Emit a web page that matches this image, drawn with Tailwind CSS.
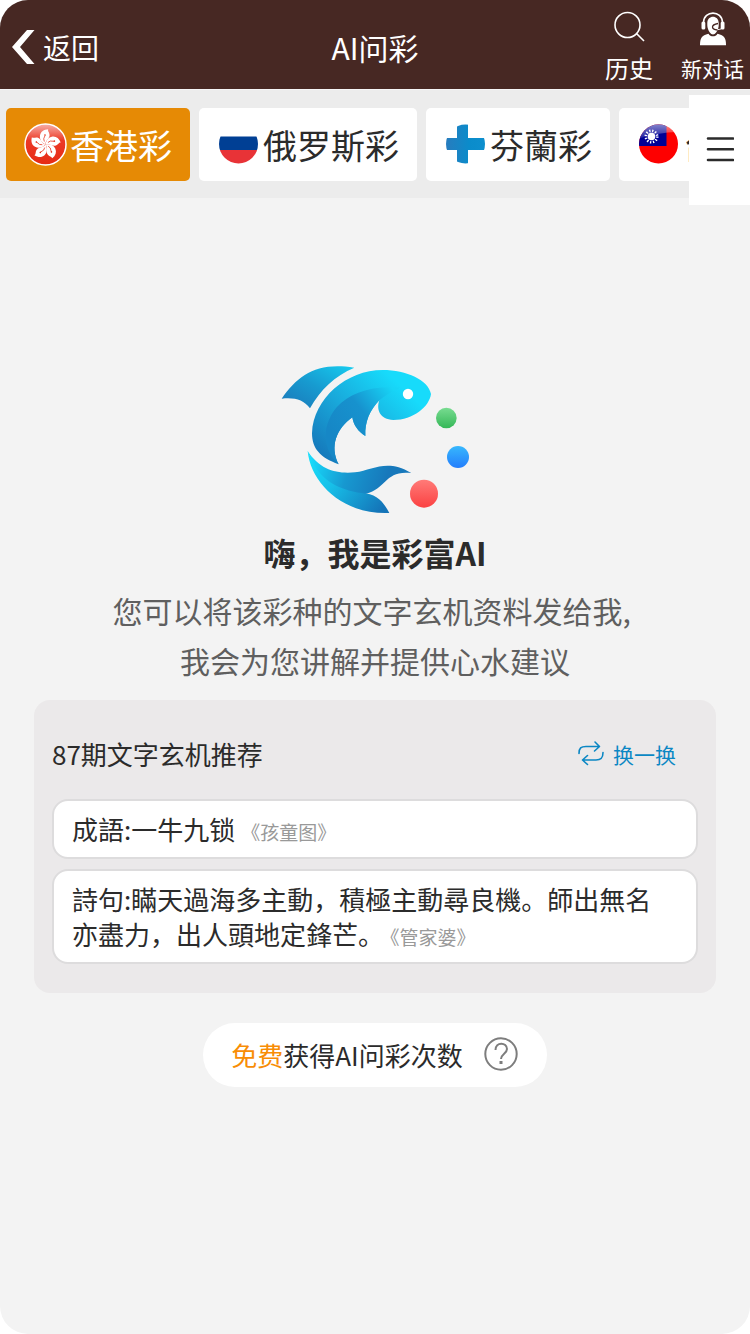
<!DOCTYPE html>
<html lang="zh-CN">
<head>
    <meta charset="UTF-8">
    <meta name="viewport" content="width=device-width, initial-scale=1.0">
    <title>AI问彩</title>
    <script src="https://cdn.jsdelivr.net/npm/@tailwindcss/browser@4"></script>
</head>
<body class="bg-white font-['Noto_Sans_CJK_SC',sans-serif] text-[#2b2b2b]">
    <div class="min-h-screen overflow-hidden rounded-[28px] bg-[#f3f3f3]">
        <!-- Header -->
        <header class="grid grid-cols-[1fr_auto_1fr] items-center h-[89px] bg-[#472823] text-white">
            <a href="#" class="flex items-center gap-2 pl-3 pt-1 text-[28px] leading-10">
                <svg class="w-[23px] h-[34px]" viewBox="0 0 23 34" fill="currentColor">
                    <path d="M15 0h7.500L8 17l14.500 17H15L0 17Z"/>
                </svg>
                返回
            </a>
            <h1 class="pt-1 text-[30px] leading-10">AI问彩</h1>
            <div class="flex justify-end gap-7 pr-[6px]">
                <button type="button" class="flex flex-col items-center pt-[5px] text-2xl">
                    <svg class="w-9 h-[42px]" viewBox="0 0 36 42" fill="none" stroke="currentColor" stroke-width="1.600">
                        <circle cx="16.500" cy="17" r="12.500"/>
                        <path d="m25.500 25.500 7.500 7.500"/>
                    </svg>
                    <span class="leading-9">历史</span>
                </button>
                <button type="button" class="flex flex-col items-center pt-[5px] text-[21px]">
                    <svg class="w-9 h-[42px]" viewBox="0 0 36 42" fill="currentColor">
                        <path d="M8.500 14.500C9 2 27 2 27.500 14.500" fill="none" stroke="currentColor" stroke-width="1.600"/>
                        <rect x="6.500" y="13.500" width="3.800" height="8" rx="1.600"/>
                        <rect x="25.700" y="13.500" width="3.800" height="8" rx="1.600"/>
                        <path d="M12.300 15c0-8.500 11.400-8.500 11.400 0 0 1 .2 3-.4 5-1 3.500-3 6.500-5.300 6.500s-4.300-3-5.300-6.500c-.5-2-.4-4-.4-5Z"/>
                        <path d="M28 20q-2 1.800-9 1.800" fill="none" stroke="currentColor" stroke-width="1"/>
                        <path d="M23 15.500q-5.500 1-5.500 3.500t5 3" fill="none" stroke="#472823" stroke-width="1.300"/>
                        <path d="M5 37.200c0-7 1.500-10 8.500-11.500 2 3.500 7 3.500 9 0 7 1.500 8.500 4.500 8.500 11.500Z"/>
                    </svg>
                    <span class="leading-9">新对话</span>
                </button>
            </div>
        </header>

        <!-- Lottery tabs -->
        <div class="relative">
            <nav class="flex gap-[9px] h-[109px] overflow-hidden border-t border-[#f6f6f6] bg-[#ececec] pl-[6px] pt-[18px] text-[34px] leading-none whitespace-nowrap">
                <button type="button" class="flex shrink-0 items-center gap-[3px] h-[73px] rounded-[5px] bg-[#e68a05] px-[18px] text-white">
                    <svg class="size-[43px]" viewBox="0 0 43 43">
                        <defs>
                            <linearGradient id="hkShine" x1="0" y1="0" x2="0" y2="1">
                                <stop offset="0" stop-color="#f7b0a8"/>
                                <stop offset=".4" stop-color="#ec3a26"/>
                                <stop offset="1" stop-color="#e62a14"/>
                            </linearGradient>
                            <g id="petal">
                                <path d="M0 0C-3.500-2-6-5-5-9.500-4-13-1-15 3.500-15 2.500-13 5-11.500 4.500-8.500 4-5.500 0-4 0 0Z" fill="#fff"/>
                                <path d="M-1-3Q-2.500-5.500 0-9" fill="none" stroke="#e62a14" stroke-width=".7"/>
                                <circle cx="0" cy="-9.500" r=".8" fill="#e62a14"/>
                            </g>
                        </defs>
                        <circle cx="21.500" cy="21.500" r="20.500" fill="url(#hkShine)" stroke="#fff" stroke-width="1.500"/>
                        <g transform="translate(21.500 21.500) rotate(-3)">
                            <use href="#petal"/>
                            <use href="#petal" transform="rotate(72)"/>
                            <use href="#petal" transform="rotate(144)"/>
                            <use href="#petal" transform="rotate(216)"/>
                            <use href="#petal" transform="rotate(288)"/>
                        </g>
                    </svg>
                    香港彩
                </button>
                <button type="button" class="flex shrink-0 items-center gap-[3px] h-[73px] rounded-[5px] bg-white px-[18px]">
                    <svg class="size-[43px]" viewBox="0 0 43 43">
                        <clipPath id="round"><circle cx="21.500" cy="21" r="19.500"/></clipPath>
                        <g clip-path="url(#round)">
                            <path d="M0 13.500h43V27H0z" fill="#003f94"/>
                            <path d="M0 27h43v16H0z" fill="#e83337"/>
                        </g>
                    </svg>
                    俄罗斯彩
                </button>
                <button type="button" class="flex shrink-0 items-center gap-[3px] h-[73px] rounded-[5px] bg-white px-[18px]">
                    <svg class="size-[43px]" viewBox="0 0 43 43">
                        <linearGradient id="cross" x1="0" y1="0" x2="1" y2="0">
                            <stop offset="0" stop-color="#2a7bbd"/>
                            <stop offset=".6" stop-color="#0a8ccb"/>
                            <stop offset="1" stop-color="#0d8fce"/>
                        </linearGradient>
                        <path clip-path="url(#round)" d="M13 0h11v15h19v12H24v16H13V27H0V15h13z" fill="url(#cross)"/>
                    </svg>
                    芬蘭彩
                </button>
                <button type="button" class="flex shrink-0 items-center gap-[3px] h-[73px] rounded-[5px] bg-white px-[18px]">
                    <svg class="size-[43px]" viewBox="0 0 43 43">
                        <linearGradient id="gloss" x1="0" y1="0" x2="0" y2="1">
                            <stop offset="0" stop-color="#fff" stop-opacity=".55"/>
                            <stop offset="1" stop-color="#fff" stop-opacity=".1"/>
                        </linearGradient>
                        <g clip-path="url(#round)">
                            <path d="M0 0h43v43H0z" fill="#fe0000"/>
                            <path d="M0 0h29.500v23H0z" fill="#000095"/>
                            <path d="M0 0h43v9q-17-1-43 7z" fill="url(#gloss)"/>
                            <circle cx="14.500" cy="13.500" r="3.800" fill="#fff"/>
                            <circle cx="14.500" cy="13.500" r="5.700" fill="none" stroke="#fff" stroke-width="2.600" stroke-dasharray="1.300 1.680"/>
                        </g>
                    </svg>
                    台灣彩
                </button>
            </nav>
            <button type="button" aria-label="菜单" class="absolute right-0 top-[6px] flex h-[110px] w-[61px] items-center justify-center bg-white">
                <svg class="w-7 h-[26px]" viewBox="0 0 28 26" stroke="#2b2b2b" stroke-width="2.600" stroke-linecap="round">
                    <path d="M2 1.500h25M2 12.200h25M2 23h25"/>
                </svg>
            </button>
        </div>

        <!-- Welcome -->
        <main class="flex flex-col items-center px-[34px] pt-[157px]">
            <svg class="w-[210px] h-[170px]" viewBox="0 0 630 510">
                <defs>
                    <linearGradient id="fin" x1="0" y1="1" x2="1" y2="0">
                        <stop offset="0" stop-color="#1b76b8"/>
                        <stop offset=".5" stop-color="#179bd0"/>
                        <stop offset="1" stop-color="#17cdf0"/>
                    </linearGradient>
                    <linearGradient id="body" x1="150" y1="320" x2="380" y2="80" gradientUnits="userSpaceOnUse">
                        <stop offset="0" stop-color="#1574b8"/>
                        <stop offset=".5" stop-color="#19a8da"/>
                        <stop offset="1" stop-color="#17dbfb"/>
                    </linearGradient>
                    <linearGradient id="belly" x1="200" y1="250" x2="375" y2="110" gradientUnits="userSpaceOnUse">
                        <stop offset="0" stop-color="#1687c6"/>
                        <stop offset=".5" stop-color="#1792ce"/>
                        <stop offset="1" stop-color="#17d5f6"/>
                    </linearGradient>
                    <linearGradient id="tail" x1="120" y1="330" x2="340" y2="400" gradientUnits="userSpaceOnUse">
                        <stop offset="0" stop-color="#17d8fa"/>
                        <stop offset=".5" stop-color="#1798d0"/>
                        <stop offset="1" stop-color="#1778bb"/>
                    </linearGradient>
                    <linearGradient id="tailLow" x1="120" y1="300" x2="330" y2="470" gradientUnits="userSpaceOnUse">
                        <stop offset="0" stop-color="#17dffb"/>
                        <stop offset=".4" stop-color="#17bfe8"/>
                        <stop offset="1" stop-color="#1474b8"/>
                    </linearGradient>
                    <linearGradient id="green" x1="0" y1="0" x2="0" y2="1">
                        <stop offset="0" stop-color="#78dc91"/>
                        <stop offset="1" stop-color="#35b757"/>
                    </linearGradient>
                    <linearGradient id="blue" x1="0" y1="0" x2="0" y2="1">
                        <stop offset="0" stop-color="#37b8fd"/>
                        <stop offset="1" stop-color="#237dfc"/>
                    </linearGradient>
                    <linearGradient id="red" x1="0" y1="0" x2="0" y2="1">
                        <stop offset="0" stop-color="#ff7b78"/>
                        <stop offset="1" stop-color="#fb4142"/>
                    </linearGradient>
                </defs>
                <path d="M35 131C85 60 140 20 253 38C195 62 150 105 120 160C100 134 75 127 35 131Z" fill="url(#fin)"/>
                <path d="M206 328C150 308 126 280 126 235C130 130 230 45 338 45C410 45 475 75 483 117C478 155 430 195 370 195C330 193 318 165 328 136C300 165 284 200 286 243C265 230 250 210 247 187C200 220 178 275 206 328Z" fill="url(#body)"/>
                <path d="M206 328C150 275 160 205 200 157C240 112 310 90 390 98C370 108 345 120 328 136C300 165 284 200 286 243C265 230 250 210 247 187C200 220 178 275 206 328Z" fill="url(#belly)"/>
                <circle cx="414" cy="117" r="15.500" fill="#fff"/>
                <path d="M113 288C122 385 220 480 358 474C343 445 325 422 288 415C240 400 150 380 113 288Z" fill="url(#tailLow)"/>
                <path d="M113 288C150 345 200 357 255 352C310 345 350 310 424 354C345 345 350 400 288 416C220 408 145 385 113 288Z" fill="url(#tail)"/>
                <circle cx="529" cy="189" r="31" fill="url(#green)"/>
                <circle cx="564" cy="306" r="33" fill="url(#blue)"/>
                <circle cx="462" cy="416" r="42" fill="url(#red)"/>
            </svg>
            <h2 class="mt-[7px] text-[32px] leading-10 font-bold">嗨，我是彩富AI</h2>
            <p class="mt-[13px] text-center text-[30px] leading-[50px] text-[#5f5f5f]">您可以将该彩种的文字玄机资料发给我,&nbsp;<br>我会为您讲解并提供心水建议</p>

            <!-- Recommendations -->
            <section class="mt-[15px] w-full rounded-2xl bg-[#ebe9ea] px-[18px] pt-9 pb-[29px] text-[26px]">
                <div class="flex items-center justify-between pr-[22px]">
                    <h3 class="leading-9">87期文字玄机推荐</h3>
                    <button type="button" class="flex items-center gap-2 text-[21px] leading-9 text-[#0b87c4]">
                        <svg class="w-7 h-7" viewBox="0 0 28 28" fill="none" stroke="currentColor" stroke-width="1.600" stroke-linecap="round" stroke-linejoin="round">
                            <path d="M2 13.500C2 8 4 6.500 9 6.500h13M18 2l4.500 4.500L17.500 11"/>
                            <path d="M26 12.500c0 5.500-2 7.500-7 7.500H6M10.500 15.500 5.500 20l5 4.500"/>
                        </svg>
                        换一换
                    </button>
                </div>
                <ul class="mt-[27px] flex flex-col gap-[10px] leading-[35px]">
                    <li class="rounded-2xl border-2 border-[#dddcdd] bg-white px-[18px] pt-[10px] pb-[11px]">成語:一牛九锁<span class="ml-[6px] text-[19px] leading-none text-[#999]">《孩童图》</span></li>
                    <li class="rounded-2xl border-2 border-[#dddcdd] bg-white pt-[10px] pb-[11px] pl-[18px] pr-7">詩句:瞞天過海多主動，積極主動尋良機。師出無名亦盡力，出人頭地定鋒芒。<span class="ml-[6px] text-[19px] leading-none text-[#999]">《管家婆》</span></li>
                </ul>
            </section>

            <button type="button" class="mt-[30px] flex items-center gap-5 rounded-full bg-white px-7 py-[14px] text-[26px] leading-9">
                <span><span class="text-[#f88d05]">免费</span>获得AI问彩次数</span>
                <svg class="size-9" viewBox="0 0 36 36" fill="none" stroke="#7d7d7d" stroke-width="2">
                    <circle cx="18" cy="17" r="15.700"/>
                    <path d="M12.500 13c0-8.500 11.500-8 11.500-1 0 4.500-6 5-6 10"/>
                    <path d="M18 24v3" stroke-width="3"/>
                </svg>
            </button>
        </main>
    </div>
</body>
</html>
